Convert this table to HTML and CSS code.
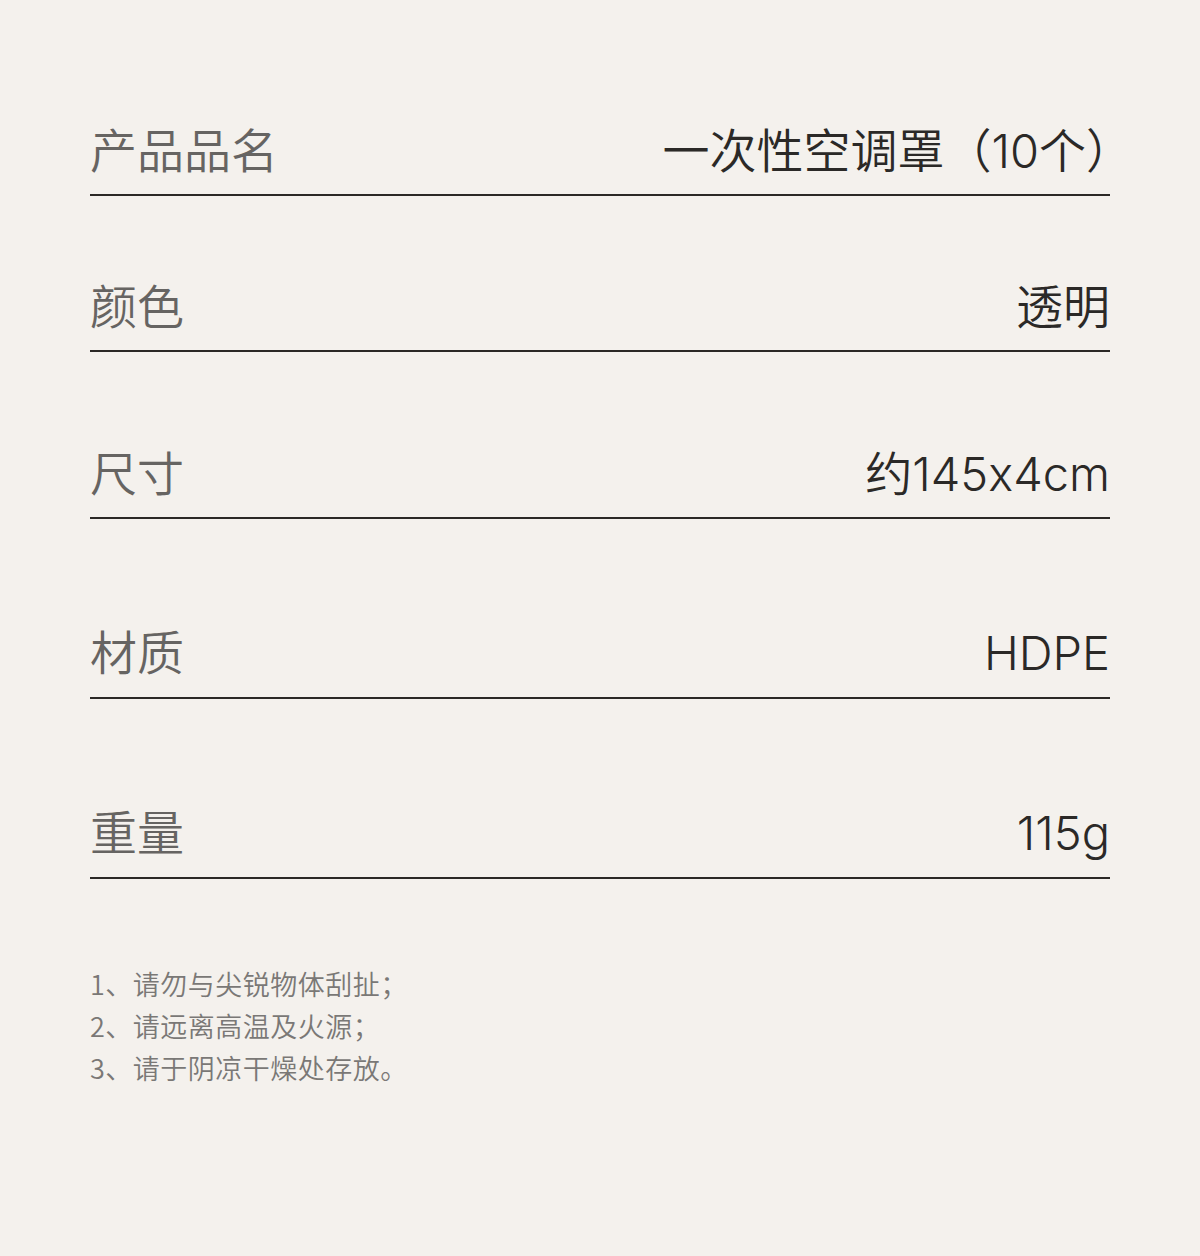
FILE: index.html
```html
<!DOCTYPE html>
<html lang="zh-CN">
<head>
  <meta charset="UTF-8" />
  <meta name="viewport" content="width=device-width, initial-scale=1.0" />
  <title>产品参数</title>
  <link rel="stylesheet" href="styles.css">
</head>
<body>
  <main class="sheet">
    <div class="spec">
      <div class="row row-name">
        <span class="label">产品品名</span>
        <span class="value">一次性空调罩（10个）</span>
      </div>
      <div class="row row-color">
        <span class="label">颜色</span>
        <span class="value">透明</span>
      </div>
      <div class="row row-size">
        <span class="label">尺寸</span>
        <span class="value">约145x4cm</span>
      </div>
      <div class="row row-material">
        <span class="label">材质</span>
        <span class="value">HDPE</span>
      </div>
      <div class="row row-weight">
        <span class="label">重量</span>
        <span class="value">115g</span>
      </div>
    </div>

    <ol class="notes">
      <li>1、请勿与尖锐物体刮扯；</li>
      <li>2、请远离高温及火源；</li>
      <li>3、请于阴凉干燥处存放。</li>
    </ol>
  </main>
</body>
</html>
```

FILE: styles.css
```css
:root {
  --bg: #f4f1ed;
  --label: #666462;
  --value: #2b2927;
  --rule: #2b2826;
  --note: #7a7876;
}

body {
  margin: 0;
  background-color: var(--bg);
  font-family: "Noto Sans CJK SC", "Noto Sans", sans-serif;
}

.sheet {
  width: 1020px;
  height: 1256px;
  box-sizing: border-box;
  margin: 0 auto;
  padding-top: 124px;
}

.row {
  display: flex;
  justify-content: space-between;
  align-items: center;
  height: 54px;
  padding-bottom: 16px;
  border-bottom: 2px solid var(--rule);
  font-size: 47px;
  line-height: 54px;
}

.row-color { margin-top: 84px; }
.row-size { margin-top: 95px; height: 54px; }
.row-material { margin-top: 107px; padding-bottom: 17px; }
.row-weight { margin-top: 107px; padding-bottom: 17px; }

.label {
  color: var(--label);
  font-weight: 350;
  padding-bottom: 6px;
}

.value {
  color: var(--value);
  font-family: "Inter", "Noto Sans CJK SC", sans-serif;
  font-weight: 350;
}

.row-name .value {
  margin-right: -23px;
}

.notes {
  list-style: none;
  margin: 84px 0 0;
  padding: 0;
  font-size: 27px;
  letter-spacing: 0.5px;
  line-height: 42px;
  color: var(--note);
  font-weight: 350;
}
```
